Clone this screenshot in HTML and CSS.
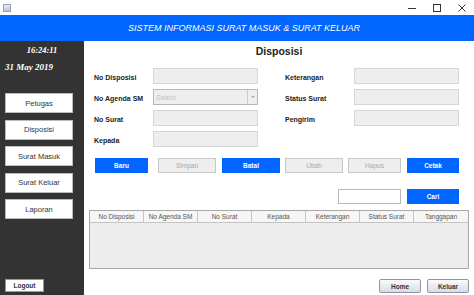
FILE: index.html
```html
<!DOCTYPE html>
<html lang="en">
<head>
    <meta charset="UTF-8">
    <title>Disposisi</title>
    <link rel="stylesheet" href="styles.css">
</head>
<body>
    <div class="titlebar">
        <span class="app-icon"></span>
        <div class="win-controls">
            <svg width="10" height="10" viewBox="0 0 10 10"><path d="M1 5.5h8" stroke="#333" stroke-width="1"/></svg>
            <svg width="10" height="10" viewBox="0 0 10 10"><rect x="1.5" y="1.5" width="7" height="7" fill="none" stroke="#333" stroke-width="1"/></svg>
            <svg width="10" height="10" viewBox="0 0 10 10"><path d="M1.5 1.5l7 7M8.5 1.5l-7 7" stroke="#333" stroke-width="1"/></svg>
        </div>
    </div>

    <div class="header">SISTEM INFORMASI SURAT MASUK &amp; SURAT KELUAR</div>

    <div class="app">
        <aside class="sidebar">
            <div class="clock">16:24:11</div>
            <div class="date">31 May 2019</div>
            <nav class="menu">
                <button class="menu-btn">Petugas</button>
                <button class="menu-btn">Disposisi</button>
                <button class="menu-btn">Surat Masuk</button>
                <button class="menu-btn">Surat Keluar</button>
                <button class="menu-btn">Laporan</button>
            </nav>
            <button class="logout-btn">Logout</button>
        </aside>

        <main class="content">
            <h1>Disposisi</h1>

            <div class="form">
                <label>No Disposisi</label>
                <div class="field"></div>
                <span></span>
                <label>Keterangan</label>
                <div class="field"></div>

                <label>No Agenda SM</label>
                <div class="field combo"><span>Select</span><i class="arrow"></i></div>
                <span></span>
                <label>Status Surat</label>
                <div class="field"></div>

                <label>No Surat</label>
                <div class="field"></div>
                <span></span>
                <label>Pengirim</label>
                <div class="field"></div>

                <label>Kepada</label>
                <div class="field"></div>
            </div>

            <div class="actions">
                <button class="btn primary w-baru">Baru</button>
                <button class="btn disabled w-simpan">Simpan</button>
                <button class="btn primary w-batal">Batal</button>
                <button class="btn disabled w-ubah">Ubah</button>
                <button class="btn disabled w-hapus">Hapus</button>
                <button class="btn primary w-cetak">Cetak</button>
            </div>

            <div class="search">
                <input type="text" class="search-input">
                <button class="btn primary w-cetak">Cari</button>
            </div>

            <div class="table">
                <div class="thead">
                    <span>No Disposisi</span>
                    <span>No Agenda SM</span>
                    <span>No Surat</span>
                    <span>Kepada</span>
                    <span>Keterangan</span>
                    <span>Status Surat</span>
                    <span>Tanggapan</span>
                </div>
            </div>

            <div class="footer">
                <button class="nav-btn">Home</button>
                <button class="nav-btn">Keluar</button>
            </div>
        </main>
    </div>
</body>
</html>
```

FILE: styles.css
```css
* {
    margin: 0;
    padding: 0;
    box-sizing: border-box;
}

body {
    width: 474px;
    height: 295px;
    overflow: hidden;
    background: white;
    font-family: 'Liberation Sans', 'DejaVu Sans', sans-serif;
}

button {
    font-family: inherit;
    cursor: pointer;
}

.titlebar {
    height: 15px;
    display: flex;
    align-items: center;
    justify-content: space-between;
    padding-left: 3px;
    background: white;
}

.app-icon {
    width: 8px;
    height: 8px;
    border: 1px solid #9aa4b0;
    background: linear-gradient(#e6ecf2, #b8c4d0);
}

.win-controls {
    display: flex;
    gap: 15px;
    padding-right: 7px;
}

.header {
    height: 26px;
    background: #0066ff;
    color: white;
    font-style: italic;
    font-size: 9px;
    display: flex;
    align-items: center;
    justify-content: center;
    padding-left: 14px;
}

.app {
    display: flex;
    height: 254px;
}

.sidebar {
    width: 84px;
    background: #333333;
    display: flex;
    flex-direction: column;
    padding: 4px 5px 3px;
}

.clock {
    font-family: 'Liberation Serif', serif;
    font-style: italic;
    font-weight: bold;
    color: white;
    font-size: 8.5px;
    text-align: center;
    height: 12px;
}

.date {
    font-family: 'Liberation Serif', serif;
    font-style: italic;
    font-weight: bold;
    color: white;
    font-size: 9px;
    margin-top: 5px;
}

.menu {
    display: flex;
    flex-direction: column;
    gap: 6.5px;
    margin-top: 21px;
}

.menu-btn {
    width: 68px;
    height: 20px;
    background: white;
    border: 1px solid #bbbbbb;
    color: #333;
    font-size: 7.5px;
}

.logout-btn {
    margin-top: auto;
    width: 39px;
    height: 13px;
    background: white;
    border: 1px solid #999;
    font-size: 6.5px;
    font-weight: bold;
    color: #333;
}

.content {
    flex: 1;
    display: flex;
    flex-direction: column;
}

h1 {
    font-size: 10.5px;
    color: #222;
    text-align: center;
    margin-top: 4px;
    height: 13px;
}

.form {
    display: grid;
    grid-template-columns: 59px 105px 27px 69px 105px;
    grid-auto-rows: 16px;
    row-gap: 5px;
    padding-left: 10px;
    margin-top: 10px;
}

.form label {
    font-size: 7px;
    font-weight: bold;
    color: #222;
    display: flex;
    align-items: center;
    padding-top: 2px;
}

.field {
    background: #eeeeee;
    border: 1px solid #d6d6d6;
}

.combo {
    display: flex;
    align-items: center;
    justify-content: space-between;
    border-color: #b8b8b8;
    font-size: 7px;
    color: #b8c2d0;
    padding-left: 2px;
}

.arrow {
    width: 10px;
    height: 14px;
    border-left: 1px solid #ccc;
    position: relative;
}

.arrow::after {
    content: '';
    position: absolute;
    left: 3px;
    top: 6px;
    border-left: 2px solid transparent;
    border-right: 2px solid transparent;
    border-top: 2px solid #aaa;
}

.actions {
    display: flex;
    margin-top: 11px;
    padding-left: 11px;
}

.btn {
    height: 15px;
    font-size: 6.5px;
    border: 1px solid transparent;
}

.btn.primary {
    background: #0066ff;
    color: white;
    font-weight: bold;
}

.btn.disabled {
    background: #eeeeee;
    border-color: #c8c8c8;
    color: #a8a8a8;
}

.w-baru { width: 53px; margin-right: 10px; }
.w-simpan { width: 58px; margin-right: 6px; }
.w-batal { width: 58px; margin-right: 5px; }
.w-ubah { width: 58px; margin-right: 5px; }
.w-hapus { width: 53px; margin-right: 6px; }
.w-cetak { width: 52px; }

.search {
    display: flex;
    justify-content: flex-end;
    gap: 6px;
    padding-right: 15px;
    margin-top: 16px;
}

.search-input {
    width: 63px;
    height: 15px;
    border: 1px solid #b8b8b8;
}

.table {
    margin: 6px 5px 0;
    height: 59px;
    border: 1px solid #a8a8a8;
    background: #ededed;
}

.thead {
    display: grid;
    grid-template-columns: repeat(7, 1fr);
    height: 12px;
    background: #f6f6f6;
}

.thead span {
    font-size: 6.5px;
    color: #555;
    text-align: center;
    line-height: 11px;
    border-right: 1px solid #c4c4c4;
    border-bottom: 1px solid #c4c4c4;
}

.thead span:last-child {
    border-right: none;
}

.footer {
    display: flex;
    justify-content: flex-end;
    gap: 6px;
    padding-right: 5px;
    margin-top: 10px;
}

.nav-btn {
    width: 42px;
    height: 14px;
    border: 1px solid #8e93a6;
    border-radius: 2px;
    background: linear-gradient(#fbfbfd, #d8dbe6);
    font-size: 6.5px;
    font-weight: bold;
    color: #333;
}
```
